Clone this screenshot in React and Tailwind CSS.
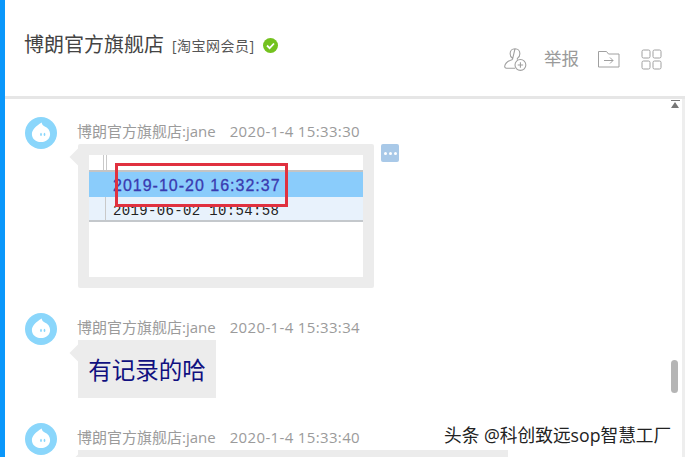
const CJK = "font-['Open_Sans','Noto_Sans_CJK_SC',sans-serif]";

function Avatar() {
  return (
    <div className="w-8 h-8 rounded-full bg-[#8ad6fb] flex items-center justify-center shrink-0">
      <svg width="28" height="28" viewBox="0 0 20 20">
        <path d="M10.500 2.500c.1 1.400 1 2.200 2.200 2.800 2.400 1.100 3.800 3 3.800 5.400 0 3.400-2.700 5.800-6.500 5.800s-6.500-2.400-6.500-5.800c0-3 2.900-5.700 7-8.200z" fill="#fff" />
        <ellipse cx="10" cy="11" rx="0.600" ry="1.100" fill="#8ad6fb" />
        <ellipse cx="12.500" cy="11" rx="0.600" ry="1.100" fill="#8ad6fb" />
      </svg>
    </div>
  );
}

function Meta({ time }) {
  return (
    <div className="h-[14px] flex items-center gap-[14px] text-[15px] leading-[14px] text-[#9b9b9b] whitespace-nowrap">
      <span className="-ml-px">博朗官方旗舰店:jane</span>
      <span className="tracking-[0.35px]">{time}</span>
    </div>
  );
}

function Message({ time, children }) {
  return (
    <div className="flex gap-[21px] items-start">
      <Avatar />
      <div className="pt-[7px]">
        <Meta time={time} />
        <div className="relative mt-[6px] w-fit">
          <div className="absolute left-[-6px] top-[7px] w-3 h-3 rotate-45 bg-[#ececec]" />
          {children}
        </div>
      </div>
    </div>
  );
}

function ImageBubble() {
  return (
    <div className="relative bg-[#ececec] p-[11px] rounded-[2px] w-[296px] h-[144px]">
      <div className="relative h-[122px] bg-white">
        <div className="h-[15px] flex">
          <div className="ml-[14px] w-[4px] border-x border-[#c9c9c9]" />
        </div>
        <div className="h-[2px] bg-[#c4c4c4]" />
        <div className="h-[25px] bg-[#8accfb] pl-[24px] text-[16px] leading-[28px] text-[#3a3ab0] font-['Liberation_Sans',sans-serif] tracking-[1px] whitespace-nowrap [-webkit-text-stroke:0.3px_#3a3ab0]">
          2019-10-20 16:32:37
        </div>
        <div className="relative h-[25px] bg-[#e8f2fc] border-b-2 border-[#c4c8cc] pl-[24px] text-[14px] leading-[29px] text-[#222] font-['Liberation_Mono',monospace] tracking-[0.35px] whitespace-nowrap">
          <div className="absolute left-[16px] top-0 bottom-0 w-px bg-[#c9c9c9]" />
          2019-06-02 10:54:58
        </div>
        <div className="absolute left-[26px] top-[8px] w-[173px] h-[44px] border-[3px] border-[#e0313f]" />
      </div>
      <div className="absolute left-[303px] top-0 w-[18px] h-[18px] rounded-[2px] bg-[#a9c9e8] flex items-center justify-center gap-[2px]">
        <span className="w-[3px] h-[3px] bg-white rounded-full" />
        <span className="w-[3px] h-[3px] bg-white rounded-full" />
        <span className="w-[3px] h-[3px] bg-white rounded-full" />
      </div>
    </div>
  );
}

export default function App() {
  return (
    <div className={`relative w-[685px] h-[457px] overflow-hidden flex bg-white ${CJK}`}>
      <div className="w-[5px] bg-[#0a97fb] shrink-0" />
      <div className="flex-1 flex flex-col min-w-0">
        <header className="h-[99px] shrink-0 border-b-[3px] border-[#e6e6e6] flex pl-[19px] pr-[23px]">
          <div className="flex items-center gap-[9px] h-[90px] self-start">
            <span className="text-[20px] text-[#444]">博朗官方旗舰店</span>
            <span className="text-[14px] tracking-[0.5px] text-[#555] -ml-px">[淘宝网会员]</span>
            <svg width="15" height="15" viewBox="0 0 15 15" className="-ml-[1px]">
              <circle cx="7.500" cy="7.500" r="7.500" fill="#74c21f" />
              <path d="M4 7.500l2.600 2.600L11 5.500" stroke="#fff" strokeWidth="1.800" fill="none" />
            </svg>
          </div>
          <div className="ml-auto flex items-center gap-[17px] h-[26px] mt-[46px] text-[#9a9a9a]">
            <svg width="26" height="26" viewBox="0 0 24 24" fill="none" stroke="#a0a0a0" strokeWidth="1">
              <path d="M12 2.500c2.700 0 4.500 2 4.500 4.600 0 1.900-.9 3.400-2.300 4.300v1.300M9.700 12.400V11.300C8.300 10.500 7.500 8.900 7.500 7.100c0-2.600 1.800-4.600 4.500-4.600zM9.700 12.400c-3 1-6.700 2.700-7.200 6.300-.1 1 .6 1.800 1.600 1.800h8" />
              <circle cx="17" cy="17.500" r="5" />
              <path d="M17 15v5M14.500 17.500h5" />
            </svg>
            <span className="text-[17.500px] leading-[26px] mb-[3px] -ml-[1px]">举报</span>
            <svg width="24" height="20" viewBox="0 0 24 20" fill="none" stroke="#a0a0a0" strokeWidth="1" className="ml-[1px]">
              <path d="M1.500 2.500h8l2 2.500h10.500v13H1.500z" />
              <path d="M7 11.500h9M13 8.500l3 3-3 3" />
            </svg>
            <svg width="21" height="21" viewBox="0 0 21 21" fill="none" stroke="#a0a0a0" strokeWidth="1" className="ml-[3px]">
              <rect x="1" y="1" width="8" height="8" rx="1.500" />
              <rect x="12" y="1" width="8" height="8" rx="1.500" />
              <rect x="1" y="12" width="8" height="8" rx="1.500" />
              <rect x="12" y="12" width="8" height="8" rx="1.500" />
            </svg>
          </div>
        </header>
        <div className="flex-1 flex min-h-0">
          <main className="flex-1 pl-[20px] pt-[18px] flex flex-col overflow-hidden">
            <Message time="2020-1-4 15:33:30"><ImageBubble /></Message>
            <div className="mt-[25px]">
              <Message time="2020-1-4 15:33:34">
                <div className="relative bg-[#ececec] h-[58px] w-[138px] pt-[3px] flex items-center justify-center text-[23.500px] text-[#101080] whitespace-nowrap">
                  有记录的哈
                </div>
              </Message>
            </div>
            <div className="mt-[25px]">
              <Message time="2020-1-4 15:33:40">
                <div className="relative bg-[#ececec] h-[58px] w-[430px]" />
              </Message>
            </div>
          </main>
          <aside className="w-[17px] shrink-0 relative border-r-[3px] border-[#eeeeee]">
            <div className="absolute left-[3px] top-[1px] w-[9px] h-px bg-[#777]" />
            <div className="absolute left-[3px] top-[3px] w-0 h-0 border-x-[4.500px] border-x-transparent border-b-[6px] border-b-[#777]" />
            <div className="absolute left-[3px] top-[261px] w-[7px] h-[33px] rounded-full bg-[#b5b5b5]" />
          </aside>
        </div>
      </div>
      <div className="absolute left-[444px] top-[424px] text-[17.700px] leading-[22px] text-[#222] whitespace-nowrap [text-shadow:0_0_2px_#fff,0_0_2px_#fff]">
        头条 @科创致远sop智慧工厂
      </div>
    </div>
  );
}
